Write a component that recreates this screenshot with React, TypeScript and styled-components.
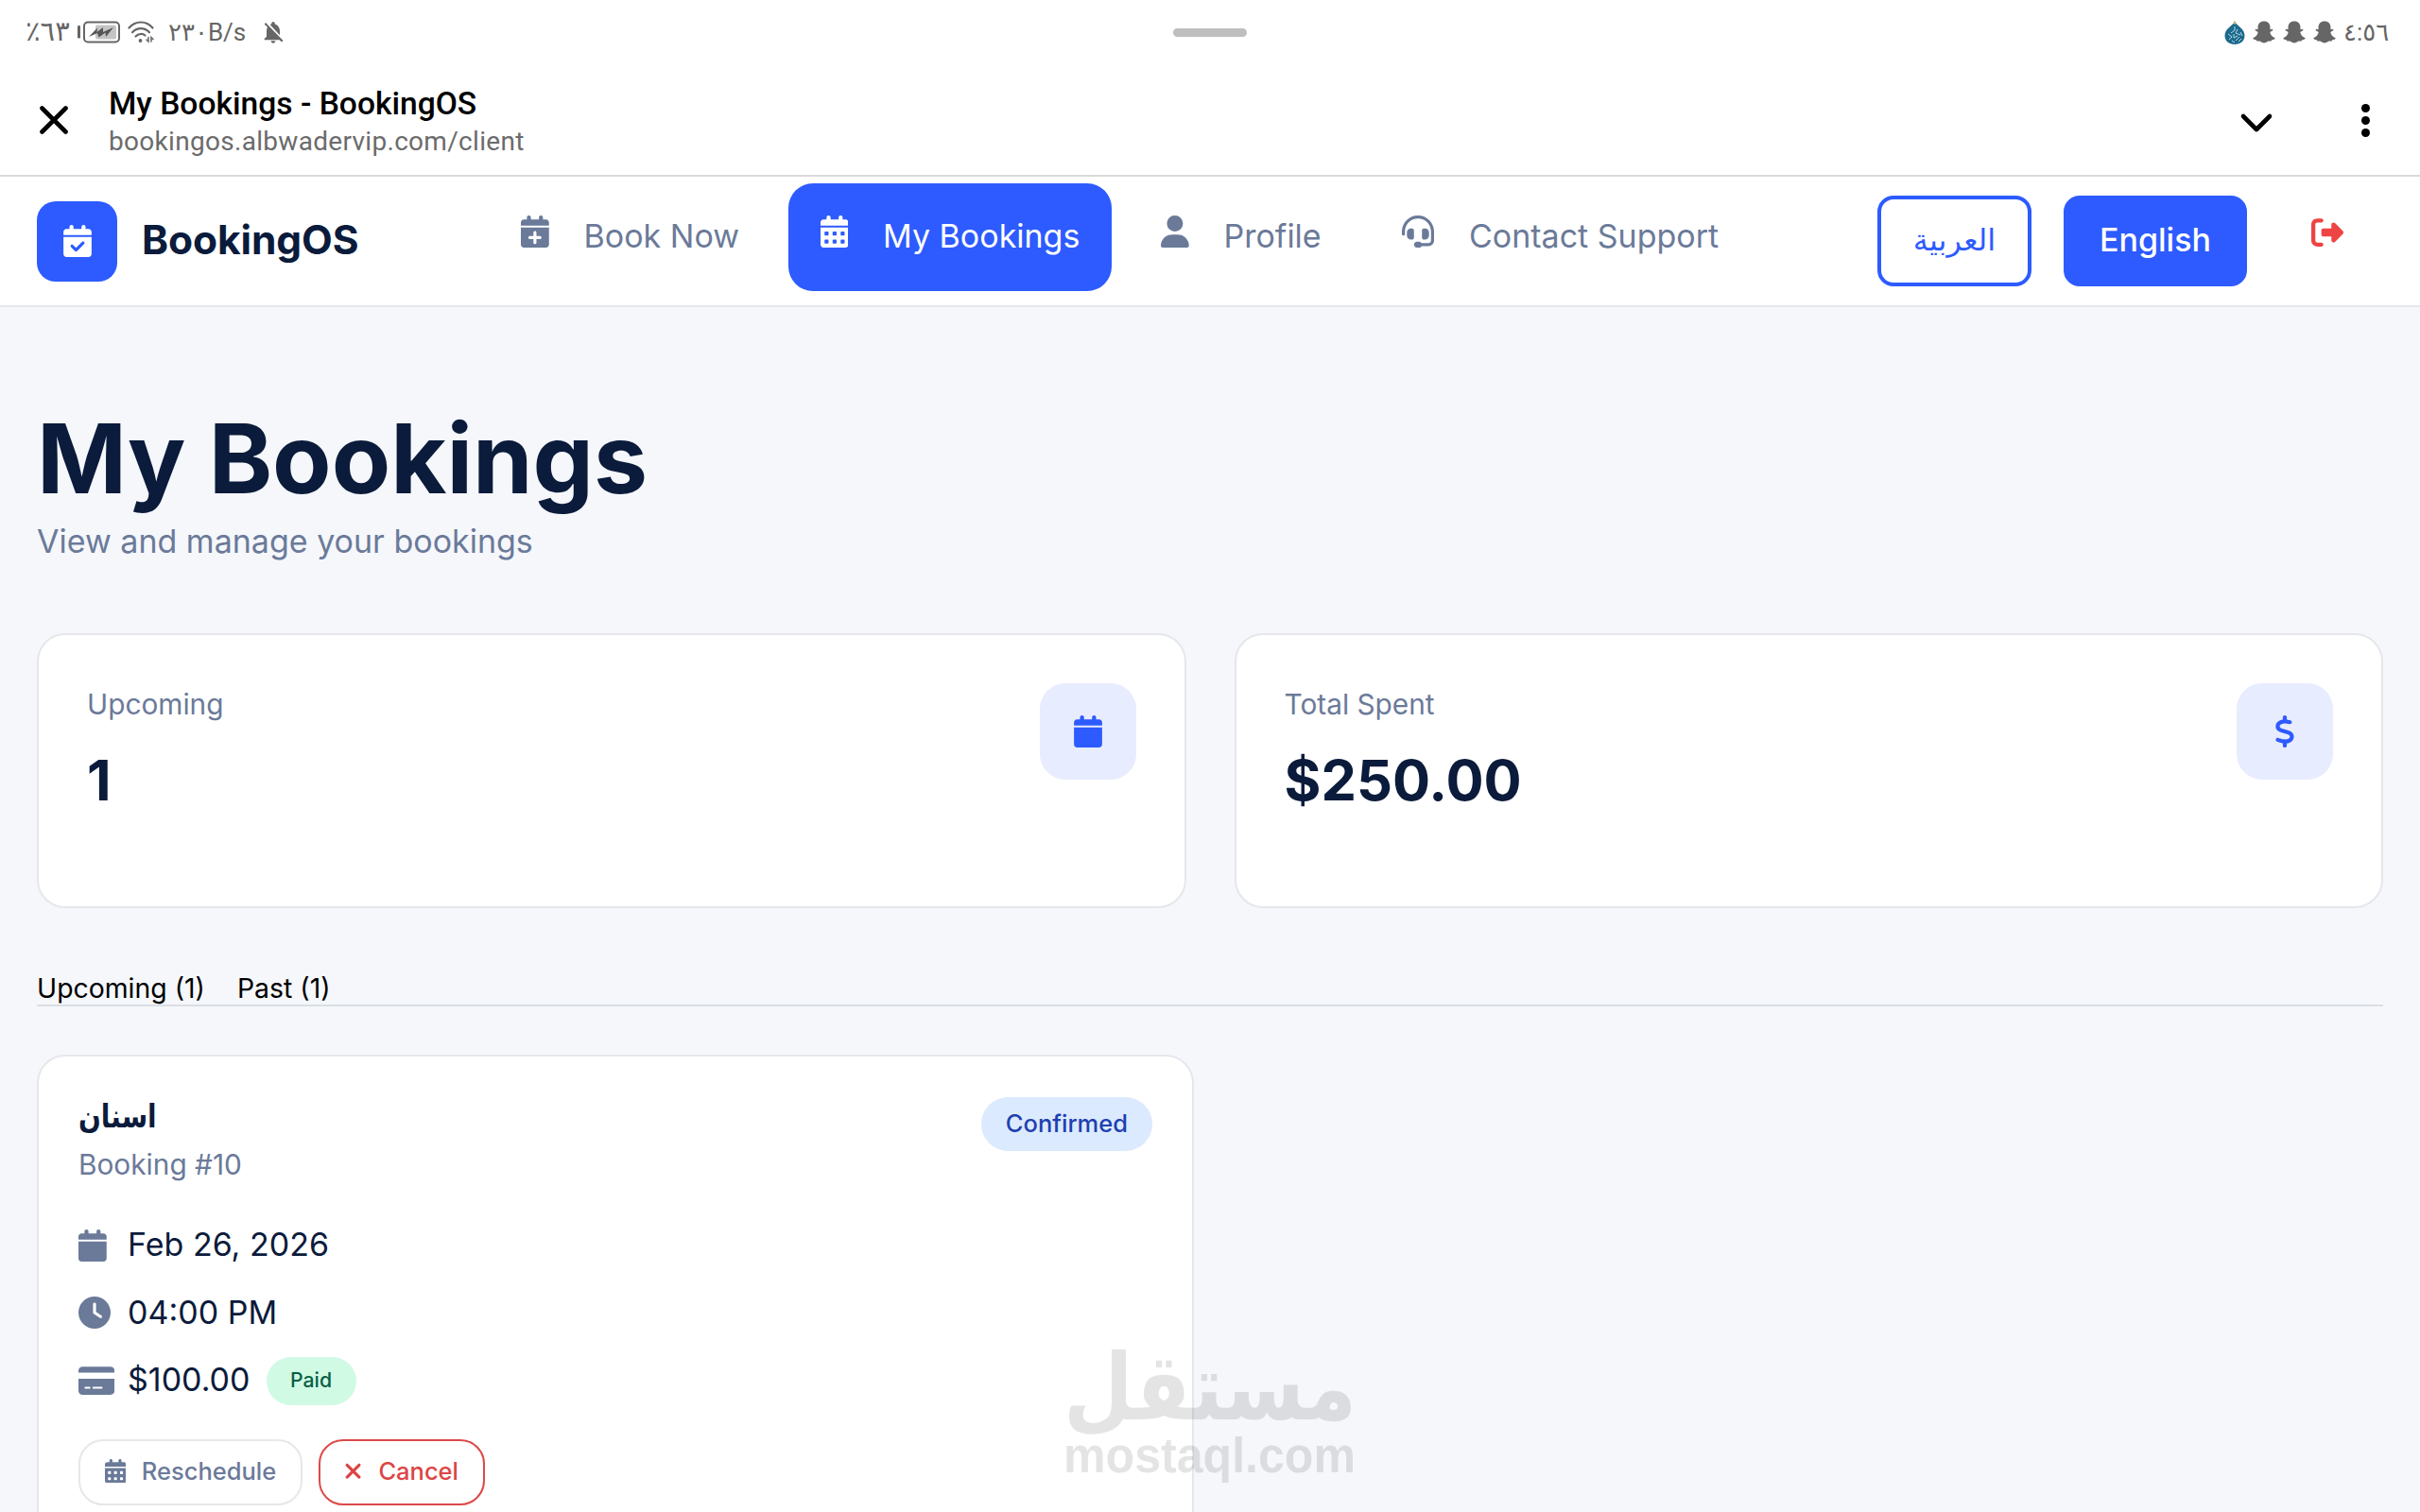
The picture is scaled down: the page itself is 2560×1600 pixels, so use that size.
import type { ReactNode } from "react";
import styled, { createGlobalStyle } from "styled-components";
import {
  FaCalendar,
  FaCalendarCheck,
  FaCalendarDays,
  FaCalendarPlus,
  FaClock,
  FaCreditCard,
  FaDollarSign,
  FaHeadset,
  FaRightFromBracket,
  FaUser,
  FaXmark,
} from "react-icons/fa6";
import { MdNotificationsOff } from "react-icons/md";

const GlobalStyle = createGlobalStyle`
  * {
    box-sizing: border-box;
  }
  body {
    margin: 0;
    background: #f5f7fb;
    color: #0b1b3b;
    font-family: Inter, "DejaVu Sans", sans-serif;
  }
  svg {
    display: block;
    flex-shrink: 0;
  }
  h1, h3, p {
    margin: 0;
  }
  button {
    font-family: inherit;
    margin: 0;
  }
`

const Page = styled.div`
  position: relative;
  width: 2560px;
  height: 1600px;
  overflow: hidden;
`

/* status bar */

const StatusBar = styled.div`
  height: 68px;
  padding: 0 32px 0 27px;
  display: grid;
  grid-template-columns: 1fr auto 1fr;
  align-items: center;
  background: #fff;
  color: #666;
  font-family: Roboto, "DejaVu Sans", sans-serif;
`

const StatusGroup = styled.div<{ $end?: boolean }>`
  display: flex;
  align-items: center;
  justify-content: ${p => (p.$end ? "flex-end" : "flex-start")};
  gap: 8px;
`

const StatusText = styled.span<{ $width: number; $spacing?: number }>`
  width: ${p => p.$width}px;
  font-size: 26px;
  line-height: 34px;
  letter-spacing: ${p => p.$spacing || 0}px;
  white-space: nowrap;
  direction: ltr;
`

const BatteryLevel = styled(StatusText)`
  font-size: 29px;
  margin-top: -2px;
`

const Speed = styled(StatusText)`
  margin: 0 8px 0 7px;
`

const Handle = styled.div`
  width: 78px;
  height: 9px;
  margin-left: 5px;
  border-radius: 5px;
  background: #bfbfbf;
`

/* browser bar */

const BrowserBar = styled.div`
  height: 119px;
  padding: 0 53px 0 42px;
  display: flex;
  align-items: center;
  background: #fff;
  border-bottom: 2px solid #dadada;
`

const TabInfo = styled.div`
  flex: 1;
  margin: 4px 0 0 43px;
  font-family: Roboto, sans-serif;
`

const TabTitle = styled.div`
  color: #000;
  font-size: 33.6px;
  font-weight: 500;
  line-height: 40px;
`

const TabUrl = styled.div`
  color: #6b6b6b;
  font-size: 28px;
  line-height: 36px;
  letter-spacing: 0.3px;
  margin-top: 2px;
`

const BrowserActions = styled.div`
  display: flex;
  align-items: center;
  gap: 94px;
  margin-top: 2px;
`

/* site header */

const Header = styled.header`
  height: 138px;
  padding: 0 81px 0 39px;
  display: flex;
  align-items: center;
  background: #fff;
  border-bottom: 2px solid #e5e7eb;
`

const Brand = styled.div`
  width: 478px;
  display: flex;
  align-items: center;
  gap: 26px;
  font-size: 42.5px;
  font-weight: 700;
  letter-spacing: -0.1px;
  span {
    margin-bottom: 4px;
  }
`

const BrandLogo = styled.div`
  width: 85px;
  height: 85px;
  border-radius: 20px;
  display: flex;
  align-items: center;
  justify-content: center;
  background: #2d5bff;
  color: #fff;
  font-size: 34px;
`

const Nav = styled.nav`
  flex: 1;
  display: flex;
  gap: 17.5px;
  margin-bottom: 9px;
`

const NavItem = styled.a<{ $active?: boolean }>`
  height: 114px;
  padding: 0 34px;
  border-radius: 26px;
  display: flex;
  align-items: center;
  gap: 36.8px;
  font-size: 34px;
  white-space: nowrap;
  color: ${p => (p.$active ? "#fff" : "#6b7a99")};
  background: ${p => (p.$active ? "#2d5bff" : "transparent")};
  svg {
    margin-bottom: 10px;
  }
  span {
    margin-bottom: 2px;
  }
`

const HeaderActions = styled.div`
  display: flex;
  align-items: center;
  gap: 34px;
`

const LangButton = styled.button<{ $active?: boolean; $width: number }>`
  width: ${p => p.$width}px;
  height: 96px;
  padding: 0 0 3px;
  border: 4px solid #2d5bff;
  border-radius: 17px;
  background: ${p => (p.$active ? "#2d5bff" : "#fff")};
  color: ${p => (p.$active ? "#fff" : "#2d5bff")};
  font-size: 34px;
  font-weight: 500;
  &:lang(ar) {
    font-size: 32px;
  }
`

const LogoutButton = styled.button`
  padding: 0;
  margin: 0 0 18px 34px;
  border: 0;
  background: none;
  color: #ef4444;
  font-size: 34px;
`

/* content */

const Main = styled.main`
  padding: 99px 39px 0;
`

const PageTitle = styled.h1`
  font-size: 102px;
  font-weight: 700;
  line-height: 123px;
`

const Subtitle = styled.p`
  color: #6b7a99;
  font-size: 34px;
  line-height: 51px;
`

const Stats = styled.div`
  margin-top: 72px;
  display: grid;
  grid-template-columns: 1fr 1fr;
  gap: 51px;
`

const Card = styled.div`
  background: #fff;
  border: 2px solid #e5e7eb;
  border-radius: 30px;
`

const StatCard = styled(Card)`
  height: 291px;
  padding: 51px;
  display: flex;
  justify-content: space-between;
  align-items: flex-start;
`

const StatLabel = styled.p`
  color: #6b7a99;
  font-size: 29.8px;
  line-height: 44px;
`

const StatValue = styled.p`
  margin-top: 22px;
  font-size: 59.5px;
  font-weight: 700;
  line-height: 72px;
`

const StatIcon = styled.div`
  width: 102px;
  height: 102px;
  border-radius: 27px;
  display: flex;
  align-items: center;
  justify-content: center;
  background: #e8ecff;
  color: #2d5bff;
  font-size: 34px;
`

const Tabs = styled.div`
  margin-top: 67px;
  display: flex;
  gap: 34px;
  border-bottom: 2px solid #dadee5;
  color: #000;
  font-size: 28.4px;
  line-height: 35px;
`

const BookingCard = styled(Card)`
  width: 1224px;
  height: 600px;
  margin-top: 51px;
  padding: 43px 42px;
`

const BookingHead = styled.div`
  display: flex;
  justify-content: space-between;
  align-items: flex-start;
`

const BookingTitle = styled.h3`
  height: 44px;
  font-size: 34px;
  font-weight: 700;
  line-height: 40px;
  transform: scaleX(0.82);
  transform-origin: left;
`

const BookingNumber = styled.p`
  margin-top: 5px;
  color: #6b7a99;
  font-size: 29.8px;
  line-height: 44px;
`

const StatusBadge = styled.span`
  height: 57px;
  padding: 0 26px 2px;
  border-radius: 29px;
  display: flex;
  align-items: center;
  background: #dbeafe;
  color: #1e40af;
  font-size: 25.5px;
  font-weight: 500;
`

const PaidBadge = styled.span`
  height: 51px;
  margin-top: 3px;
  padding: 0 25.5px 2px;
  border-radius: 26px;
  display: flex;
  align-items: center;
  background: #d1fae5;
  color: #065f46;
  font-size: 21.25px;
  font-weight: 500;
`

const Details = styled.div`
  margin-top: 37px;
  display: grid;
  gap: 20.5px;
`

const DetailRow = styled.div`
  height: 51px;
  display: flex;
  align-items: center;
  gap: 17px;
  font-size: 34px;
`

const DetailIcon = styled.span`
  width: 35px;
  margin-top: 2px;
  color: #6b7a99;
`

const Actions = styled.div`
  margin-top: 38px;
  display: flex;
  gap: 17px;
`

const ActionButton = styled.button<{ $danger?: boolean }>`
  height: 70px;
  padding: 0 25.5px 3px;
  border: 2px solid ${p => (p.$danger ? "#dc4a4a" : "#e5e7eb")};
  border-radius: 26px;
  display: flex;
  align-items: center;
  gap: 17px;
  background: #fff;
  color: ${p => (p.$danger ? "#dc4545" : "#6b7a99")};
  font-size: 25.5px;
  font-weight: 500;
`

/* font awesome glyphs are not square, each keeps its own advance width */
const Glyph = styled.span<{ $em?: number }>`
  display: flex;
  width: ${p => p.$em || 0.875}em;
  svg {
    width: 100%;
  }
`

const Watermark = styled.div`
  position: absolute;
  left: 1106px;
  top: 1400px;
  opacity: 0.1;
`

function Battery() {
  return (
    <svg width="45" height="24" viewBox="0 0 45 24" fill="none">
      <rect x="0" y="5" width="3" height="13.500" rx="1" fill="#666" />
      <rect x="7" y="1.500" width="37" height="21" rx="4" stroke="#666" strokeWidth="2" />
      <rect x="19" y="4.500" width="22" height="15" rx="2" fill="#c4c4c4" />
      <path d="M12 17 21 7.500 20.500 12 27 7 27 12 38 7 30 17 29.500 12.500 22.500 17.500 21 13Z" fill="#555" />
    </svg>
  )
}

function Wifi() {
  return (
    <svg width="28" height="24" viewBox="0 0 28 24" fill="none" stroke="#666" strokeWidth="2.2" strokeLinecap="round">
      <path d="M1.500 7.500C8.500-.500 19.500-.500 26.500 7.500" />
      <path d="M5 12.200C10 6.800 18 6.800 23 12.200" />
      <path d="M8.500 16.500C11.500 13.300 16 13.300 18.500 15.500" />
      <circle cx="13.500" cy="21" r="1.900" fill="#666" stroke="none" />
      <path d="M22 17.500v4.500l-2-2M25 22v-4.500l2 2" strokeWidth="1.500" />
    </svg>
  )
}

function Drop() {
  return (
    <svg width="22" height="25" viewBox="0 0 22 25" fill="none">
      <path d="M11 0C12 5 21.500 8 21.500 15.500 21.500 21.500 17 25 11 25S.500 21.500 .500 15.500C.500 8 10 5 11 0Z" fill="#1c6a8c" />
      <path
        d="M11 6v4l-4 3M14 9l-2 4 5 2M4 14l4 3-3 3M10 14v4l4-2M16 17l-4 4M8 21l3 2M17 12l2 4M15 22l3-3"
        stroke="#b5d8e6"
        strokeWidth="1"
      />
      <path d="M11 0 12.300 3.500 9.700 3.500Z" fill="#d3c65a" />
    </svg>
  )
}

function Ghost() {
  return (
    <svg width="24" height="24" viewBox="0 0 24 24" fill="#666">
      <path d="M12 .5C16 .5 18.500 3.200 18.500 7V9.200L20.800 8.800C21.700 9 21.500 10.100 20.800 10.500L18.300 12C19 15 20.500 17 23.300 18 24 18.500 23.500 19.300 22.500 19.700L20.300 20.300 19.600 21.600C18 21.400 16.800 21.300 15.700 22 13.200 23.900 10.800 23.900 8.300 22 7.200 21.300 6 21.400 4.400 21.600L3.700 20.300 1.500 19.700C.5 19.300 0 18.500 .7 18 3.500 17 5 15 5.700 12L3.200 10.500C2.500 10.100 2.300 9 3.200 8.800L5.500 9.200V7C5.500 3.200 8 .5 12 .5Z" />
    </svg>
  )
}

function Logo() {
  return (
    <svg width="348" height="200" viewBox="0 0 348 200" overflow="visible">
      <text
        x="19"
        y="102"
        textLength="310"
        lengthAdjust="spacingAndGlyphs"
        fontFamily="DejaVu Sans, sans-serif"
        fontWeight="700"
        fontSize="98"
      >
        مستقل
      </text>
      <text
        x="19"
        y="158"
        textLength="309"
        lengthAdjust="spacingAndGlyphs"
        fontFamily="Liberation Sans, sans-serif"
        fontWeight="700"
        fontSize="51"
      >
        mostaql.com
      </text>
    </svg>
  )
}

function Detail({ icon, children }: { icon: ReactNode; children: ReactNode }) {
  return (
    <DetailRow>
      <DetailIcon>{icon}</DetailIcon>
      {children}
    </DetailRow>
  )
}

function Stat({ label, value, icon }: { label: string; value: string; icon: ReactNode }) {
  return (
    <StatCard>
      <div>
        <StatLabel>{label}</StatLabel>
        <StatValue>{value}</StatValue>
      </div>
      <StatIcon>{icon}</StatIcon>
    </StatCard>
  )
}

function App() {
  return (
    <Page>
      <GlobalStyle />

      <StatusBar>
        <StatusGroup>
          <BatteryLevel $width={47} $spacing={2}>٪٦٣</BatteryLevel>
          <Battery />
          <Wifi />
          <Speed $width={81}>٢٣٠B/s</Speed>
          <MdNotificationsOff size={28} />
        </StatusGroup>
        <Handle />
        <StatusGroup $end>
          <Drop />
          <Ghost />
          <Ghost />
          <Ghost />
          <StatusText $width={49} $spacing={1}>٤:٥٦</StatusText>
        </StatusGroup>
      </StatusBar>

      <BrowserBar>
        <svg width="30" height="30" viewBox="0 0 30 30" stroke="#000" strokeWidth="4.600" strokeLinecap="round">
          <path d="M2.500 2.500 27.500 27.500M27.500 2.500 2.500 27.500" />
        </svg>
        <TabInfo>
          <TabTitle>My Bookings - BookingOS</TabTitle>
          <TabUrl>bookingos.albwadervip.com/client</TabUrl>
        </TabInfo>
        <BrowserActions>
          <svg width="34" height="16" viewBox="0 0 34 16" fill="none" stroke="#000" strokeWidth="4.600" strokeLinecap="round" strokeLinejoin="round" overflow="visible">
            <path d="M3 3 17 17 31 3" />
          </svg>
          <svg width="9" height="35" viewBox="0 0 9 35">
            <circle cx="4.500" cy="4.500" r="4.500" />
            <circle cx="4.500" cy="17.500" r="4.500" />
            <circle cx="4.500" cy="30.500" r="4.500" />
          </svg>
        </BrowserActions>
      </BrowserBar>

      <Header>
        <Brand>
          <BrandLogo>
            <FaCalendarCheck />
          </BrandLogo>
          <span>BookingOS</span>
        </Brand>
        <Nav>
          <NavItem>
            <Glyph><FaCalendarPlus /></Glyph>
            <span>Book Now</span>
          </NavItem>
          <NavItem $active>
            <Glyph><FaCalendarDays /></Glyph>
            <span>My Bookings</span>
          </NavItem>
          <NavItem>
            <Glyph><FaUser /></Glyph>
            <span>Profile</span>
          </NavItem>
          <NavItem>
            <Glyph $em={1}><FaHeadset /></Glyph>
            <span>Contact Support</span>
          </NavItem>
        </Nav>
        <HeaderActions>
          <LangButton lang="ar" $width={163}>العربية</LangButton>
          <LangButton $width={194} $active>English</LangButton>
          <LogoutButton>
            <FaRightFromBracket />
          </LogoutButton>
        </HeaderActions>
      </Header>

      <Main>
        <PageTitle>My Bookings</PageTitle>
        <Subtitle>View and manage your bookings</Subtitle>

        <Stats>
          <Stat label="Upcoming" value="1" icon={<FaCalendar />} />
          <Stat label="Total Spent" value="$250.00" icon={<FaDollarSign />} />
        </Stats>

        <Tabs>
          <span>Upcoming (1)</span>
          <span>Past (1)</span>
        </Tabs>

        <BookingCard>
          <BookingHead>
            <div>
              <BookingTitle>اسنان</BookingTitle>
              <BookingNumber>Booking #10</BookingNumber>
            </div>
            <StatusBadge>Confirmed</StatusBadge>
          </BookingHead>
          <Details>
            <Detail icon={<Glyph><FaCalendar /></Glyph>}>Feb 26, 2026</Detail>
            <Detail icon={<Glyph $em={1}><FaClock /></Glyph>}>04:00 PM</Detail>
            <Detail icon={<Glyph $em={1.125}><FaCreditCard /></Glyph>}>
              $100.00
              <PaidBadge>Paid</PaidBadge>
            </Detail>
          </Details>
          <Actions>
            <ActionButton>
              <Glyph><FaCalendarDays /></Glyph>
              Reschedule
            </ActionButton>
            <ActionButton $danger>
              <Glyph $em={0.75}><FaXmark /></Glyph>
              Cancel
            </ActionButton>
          </Actions>
        </BookingCard>
      </Main>

      <Watermark>
        <Logo />
      </Watermark>
    </Page>
  )
}

export default App;
